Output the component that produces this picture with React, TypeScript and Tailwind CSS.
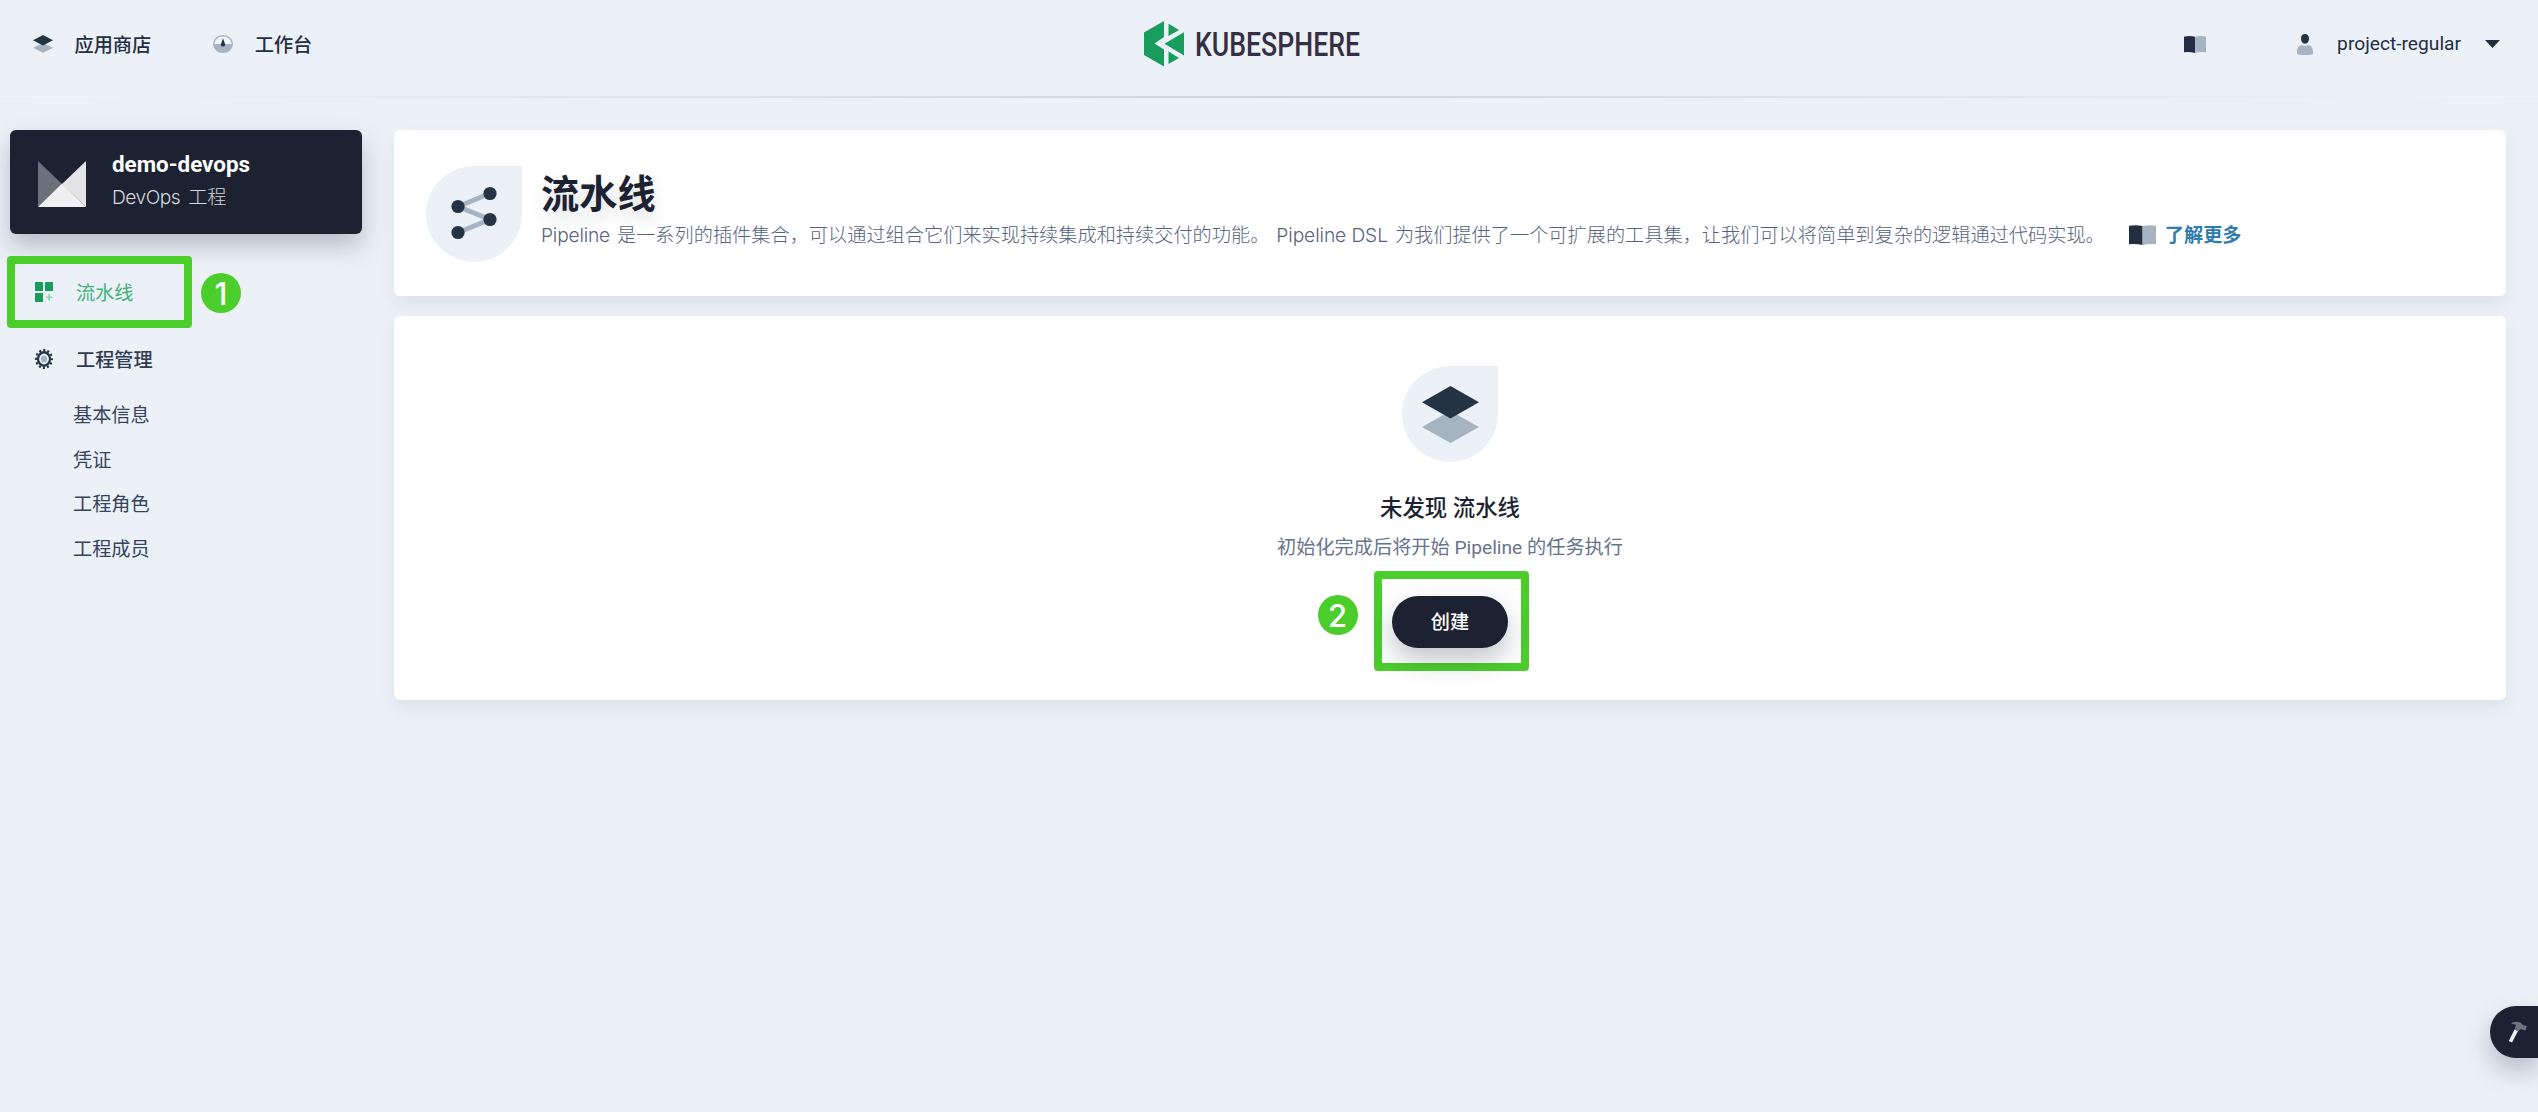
import React from "react";

const DARK = "#242e42";
const NAVY = "#253445";
const MUTED = "#a6b4c2";

function Layers({ className }: { className: string }) {
  return (
    <svg className={className} viewBox="0 0 57 57">
      <path d="M0 41 28.5 25 57 41 28.5 57Z" fill={MUTED} />
      <path d="M0 16.2 28.5 0 57 16.2 28.5 32.6Z" fill={NAVY} />
    </svg>
  );
}

function SmallLayers() {
  return (
    <svg className="h-[18px] w-5" viewBox="0 0 20 18">
      <path d="M0 12.800 10 8 20 12.800 10 17.800Z" fill={MUTED} />
      <path d="M0 5.300 10 0 20 5.300 10 10.400Z" fill={NAVY} />
    </svg>
  );
}

function Gauge() {
  return (
    <svg className="h-[18px] w-5" viewBox="0 0 20 18" preserveAspectRatio="none">
      <ellipse cx="10" cy="9" rx="9.3" ry="8.3" fill="#f2f6f9" stroke={MUTED} strokeWidth="1.4" />
      <path d="M.6 9H19.4A9.4 8.4 0 0 1 .6 9Z" fill={MUTED} />
      <path d="M10 3.2 12.2 9.4A2.2 2.2 0 1 1 7.8 9.4Z" fill={NAVY} />
    </svg>
  );
}

function Book({ className }: { className: string }) {
  return (
    <svg className={className} viewBox="0 0 27 20" preserveAspectRatio="none">
      <path d="M0 .8Q7-.6 13.6 1V20Q7 18.4 0 19.2Z" fill={DARK} />
      <path d="M13.6 1Q20-.6 27 .8V19.2Q20 18.4 13.6 20Z" fill={MUTED} />
    </svg>
  );
}

function User() {
  return (
    <svg className="h-[21px] w-4" viewBox="0 0 16 21">
      <path d="M8 0C10.600 0 12 1.600 12 4.300 12 7.600 10.600 9.800 8 9.800S4 7.600 4 4.300C4 1.600 5.400 0 8 0Z" fill={NAVY} />
      <path d="M0 17.500C0 13.600 1.900 11.200 5 11.200 7 12 9 12 11 11.200 14.100 11.200 16 13.600 16 17.500V19.300Q16 20.200 15 20.400 8 21.400 1 20.400 0 20.200 0 19.300Z" fill={MUTED} />
    </svg>
  );
}

function Grid() {
  return (
    <svg className="h-5 w-[18px]" viewBox="0 0 18 20">
      <path d="M0 0h8v9H0zM10 0h8v9h-8zM0 11h8v9H0z" fill="#189d5d" />
      <path d="M13.300 12.200h1.700v2.200h2.200v1.700H15v2.300h-1.700v-2.300h-2.200v-1.700h2.200z" fill="#82dcb0" />
    </svg>
  );
}

function Gear() {
  return (
    <svg className="h-5 w-[18px]" viewBox="0 0 20 20" preserveAspectRatio="none">
      <circle cx="10" cy="10" r="8.900" fill="none" stroke={NAVY} strokeWidth="2.200" strokeDasharray="2.330 2.330" strokeDashoffset="1.165" />
      <circle cx="10" cy="10" r="6.700" fill="none" stroke={NAVY} strokeWidth="2.500" />
      <circle cx="10" cy="10" r="3.500" fill={MUTED} />
    </svg>
  );
}

function Pipeline() {
  return (
    <svg className="h-[54px] w-[46px]" viewBox="0 0 46 54">
      <path d="M39 7.500 7 20.500 39 33.500 7 46.500" fill="none" stroke={MUTED} strokeWidth="4.800" />
      <g fill={NAVY}>
        <circle cx="39" cy="7.500" r="6.600" />
        <circle cx="7" cy="20.500" r="6.600" />
        <circle cx="39" cy="33.500" r="6.600" />
        <circle cx="7" cy="46.500" r="6.600" />
      </g>
    </svg>
  );
}

function Logo() {
  return (
    <svg className="h-[46px] w-[226px] overflow-visible" viewBox="0 0 226 46">
      <g fill="#189d5d">
        <path d="M20 0V16L10.500 22.500 20 28.500V45.500L0 34V11.500Z" />
        <path d="M24.500 2.800 35 9 24.500 15Z" />
        <path d="M40 11.200V34.500L20.500 22.800Z" />
        <path d="M24.500 30.500 35 37 24.500 43Z" />
      </g>
      <text
        x="51"
        y="34.500"
        fontFamily="Roboto, sans-serif"
        fontWeight="500"
        fontSize="34"
        textLength="165"
        lengthAdjust="spacingAndGlyphs"
        fill="#362e42"
      >
        KUBESPHERE
      </text>
    </svg>
  );
}

function Hammer() {
  return (
    <svg className="h-6 w-[20px]" viewBox="0 0 20 24">
      <path d="M6.500 9.500 10 11 4 22.500 .800 21Z" fill="#eef0f2" />
      <path d="M2.500 3.500Q7 .5 12.500 2.500L15 5 18.800 6 17.500 10.500 12.800 9 10.500 11.300 6.500 9.500 8 5Q5.500 3.300 2.500 3.500Z" fill="#6d7481" />
    </svg>
  );
}

function Badge({ n, className }: { n: number; className: string }) {
  return (
    <span className={`absolute flex size-10 items-center justify-center rounded-full bg-[#4bce2c] font-[Inter,sans-serif] text-[31px] leading-none font-medium text-white ${className}`}>
      {n}
    </span>
  );
}

const subItems = ["基本信息", "凭证", "工程角色", "工程成员"];

export default function App() {
  return (
    <div className="relative flex h-[1112px] w-[2538px] flex-col overflow-hidden bg-[#ebf1f7] font-[Roboto,'Noto_Sans_CJK_SC',sans-serif] text-[19.2px] leading-7 text-[#242e42]">
      <header className="flex h-24 shrink-0 items-center justify-between pr-[38px] pb-2 pl-[33px]">
        <nav className="flex w-[1111px] items-center font-medium">
          <SmallLayers />
          <span className="mt-[3px] ml-[21.5px]">应用商店</span>
          <span className="ml-[61.5px]"><Gauge /></span>
          <span className="mt-[3px] ml-[22px]">工作台</span>
        </nav>
        <Logo />
        <div className="flex flex-1 items-center justify-end">
          <Book className="h-[17px] w-[22px]" />
          <span className="ml-[91px]"><User /></span>
          <span className="ml-6">project-regular</span>
          <svg className="ml-6 h-2 w-[15px]" viewBox="0 0 15 8"><path d="M0 0h15L7.500 8Z" fill={DARK} /></svg>
        </div>
      </header>
      <div className="h-0.5 shrink-0 bg-linear-to-r from-[#f1f5f9] via-[#cdd6df] to-[#f1f5f9]" />

      <div className="flex gap-8 pt-8 pr-8 pl-[10px]">
        <aside className="w-[352px] shrink-0">
          <div className="flex h-[104px] items-center rounded-md bg-[#1c2231] pl-7 shadow-[0_12px_24px_0_rgba(36,46,66,0.26)]">
            <svg className="mt-1 h-[46px] w-12" viewBox="0 0 48 46">
              <path d="M0 0 24 23 0 46Z" fill="#6b707b" />
              <path d="M48 0V46L24 23Z" fill="#e4e4e7" />
              <path d="M24 22.500 48 46H0Z" fill="#f0eff2" />
            </svg>
            <div className="mb-[3px] ml-[26px]">
              <div className="text-[22.4px] font-bold text-white">demo-devops</div>
              <div className="mt-[5px] font-[Inter,'Noto_Sans_CJK_SC',sans-serif] font-light tracking-[-0.5px] text-[#d3d8df]">
                DevOps <span className="ml-[3px] tracking-normal">工程</span>
              </div>
            </div>
          </div>

          <div className="relative mt-[22px] -ml-[3px] flex h-[72px] w-[185px] items-center rounded-[4px] border-8 border-[#4bce2c] pl-5 text-[#45b27b]">
            <Grid />
            <span className="mt-1 ml-[23px]">流水线</span>
            <Badge n={1} className="top-[9px] left-[186px]" />
          </div>
          <div className="mt-[17px] ml-[25px] flex items-center font-medium text-[#303a53]">
            <Gear />
            <span className="mt-0.5 -mb-0.5 ml-[23px]">工程管理</span>
          </div>
          <ul className="mt-[29px] ml-[63px] flex flex-col gap-[16.6px] text-[#36435c]">
            {subItems.map((t) => (
              <li key={t}>{t}</li>
            ))}
          </ul>
        </aside>

        <main className="flex flex-1 flex-col gap-5">
          <section className="flex h-[166px] items-start rounded-md bg-white pt-9 pl-8 shadow-[0_8px_16px_0_rgba(36,46,66,0.07)]">
            <div className="flex size-24 shrink-0 items-center justify-center rounded-full rounded-tr-none bg-[#ebf1f7] pb-0.5">
              <Pipeline />
            </div>
            <div className="ml-[19px]">
              <h1 className="pt-[3px] text-[38.2px] leading-[52px] font-bold text-[#1c2231] [text-shadow:0_8px_16px_rgba(36,46,66,0.15)]">流水线</h1>
              <div className="flex items-center font-light text-[#56637e]">
                <p className="whitespace-nowrap">
                  <span className="font-[Inter,sans-serif] tracking-[-0.2px]">Pipeline</span>
                  <span className="ml-[7px]">是一系列的插件集合，可以通过组合它们来实现持续集成和持续交付的功能。</span>
                  <span className="ml-[7px] font-[Inter,sans-serif] tracking-[-0.1px]">Pipeline DSL</span>
                  <span className="ml-[7px]">为我们提供了一个可扩展的工具集，让我们可以将简单到复杂的逻辑通过代码实现。</span>
                </p>
                <Book className="mb-0.5 ml-[24px] h-5 w-[27px]" />
                <a className="ml-[9px] font-bold text-[#2f7bad]">了解更多</a>
              </div>
            </div>
          </section>

          <section className="flex h-[384px] flex-col items-center rounded-md bg-white pt-[50px] shadow-[0_8px_16px_0_rgba(36,46,66,0.07)]">
            <div className="flex size-24 shrink-0 items-center justify-center rounded-full rounded-tr-none bg-[#ebf1f7]">
              <Layers className="size-[57px]" />
            </div>
            <h2 className="mt-8 text-[22.4px] font-medium text-[#1c2231]">未发现 流水线</h2>
            <p className="mt-[12px] text-[#66738c]">初始化完成后将开始 Pipeline 的任务执行</p>
            <div className="relative mt-[9px] ml-0.5 flex h-[100px] w-[155px] items-center justify-center rounded-[4px] border-8 border-[#4bce2c]">
              <Badge n={2} className="top-4 -left-16" />
              <button className="mt-0.5 mr-0.5 h-[52px] w-[116px] rounded-full bg-[#1c2231] pt-px font-medium text-white shadow-[0_12px_26px_0_rgba(36,46,66,0.28)]">创建</button>
            </div>
          </section>
        </main>
      </div>

      <div className="absolute top-[1006px] right-0 flex h-[52px] w-12 items-center rounded-l-full bg-[#1c2231] pl-[18px] shadow-[0_12px_26px_0_rgba(36,46,66,0.28)]">
        <Hammer />
      </div>
    </div>
  );
}
